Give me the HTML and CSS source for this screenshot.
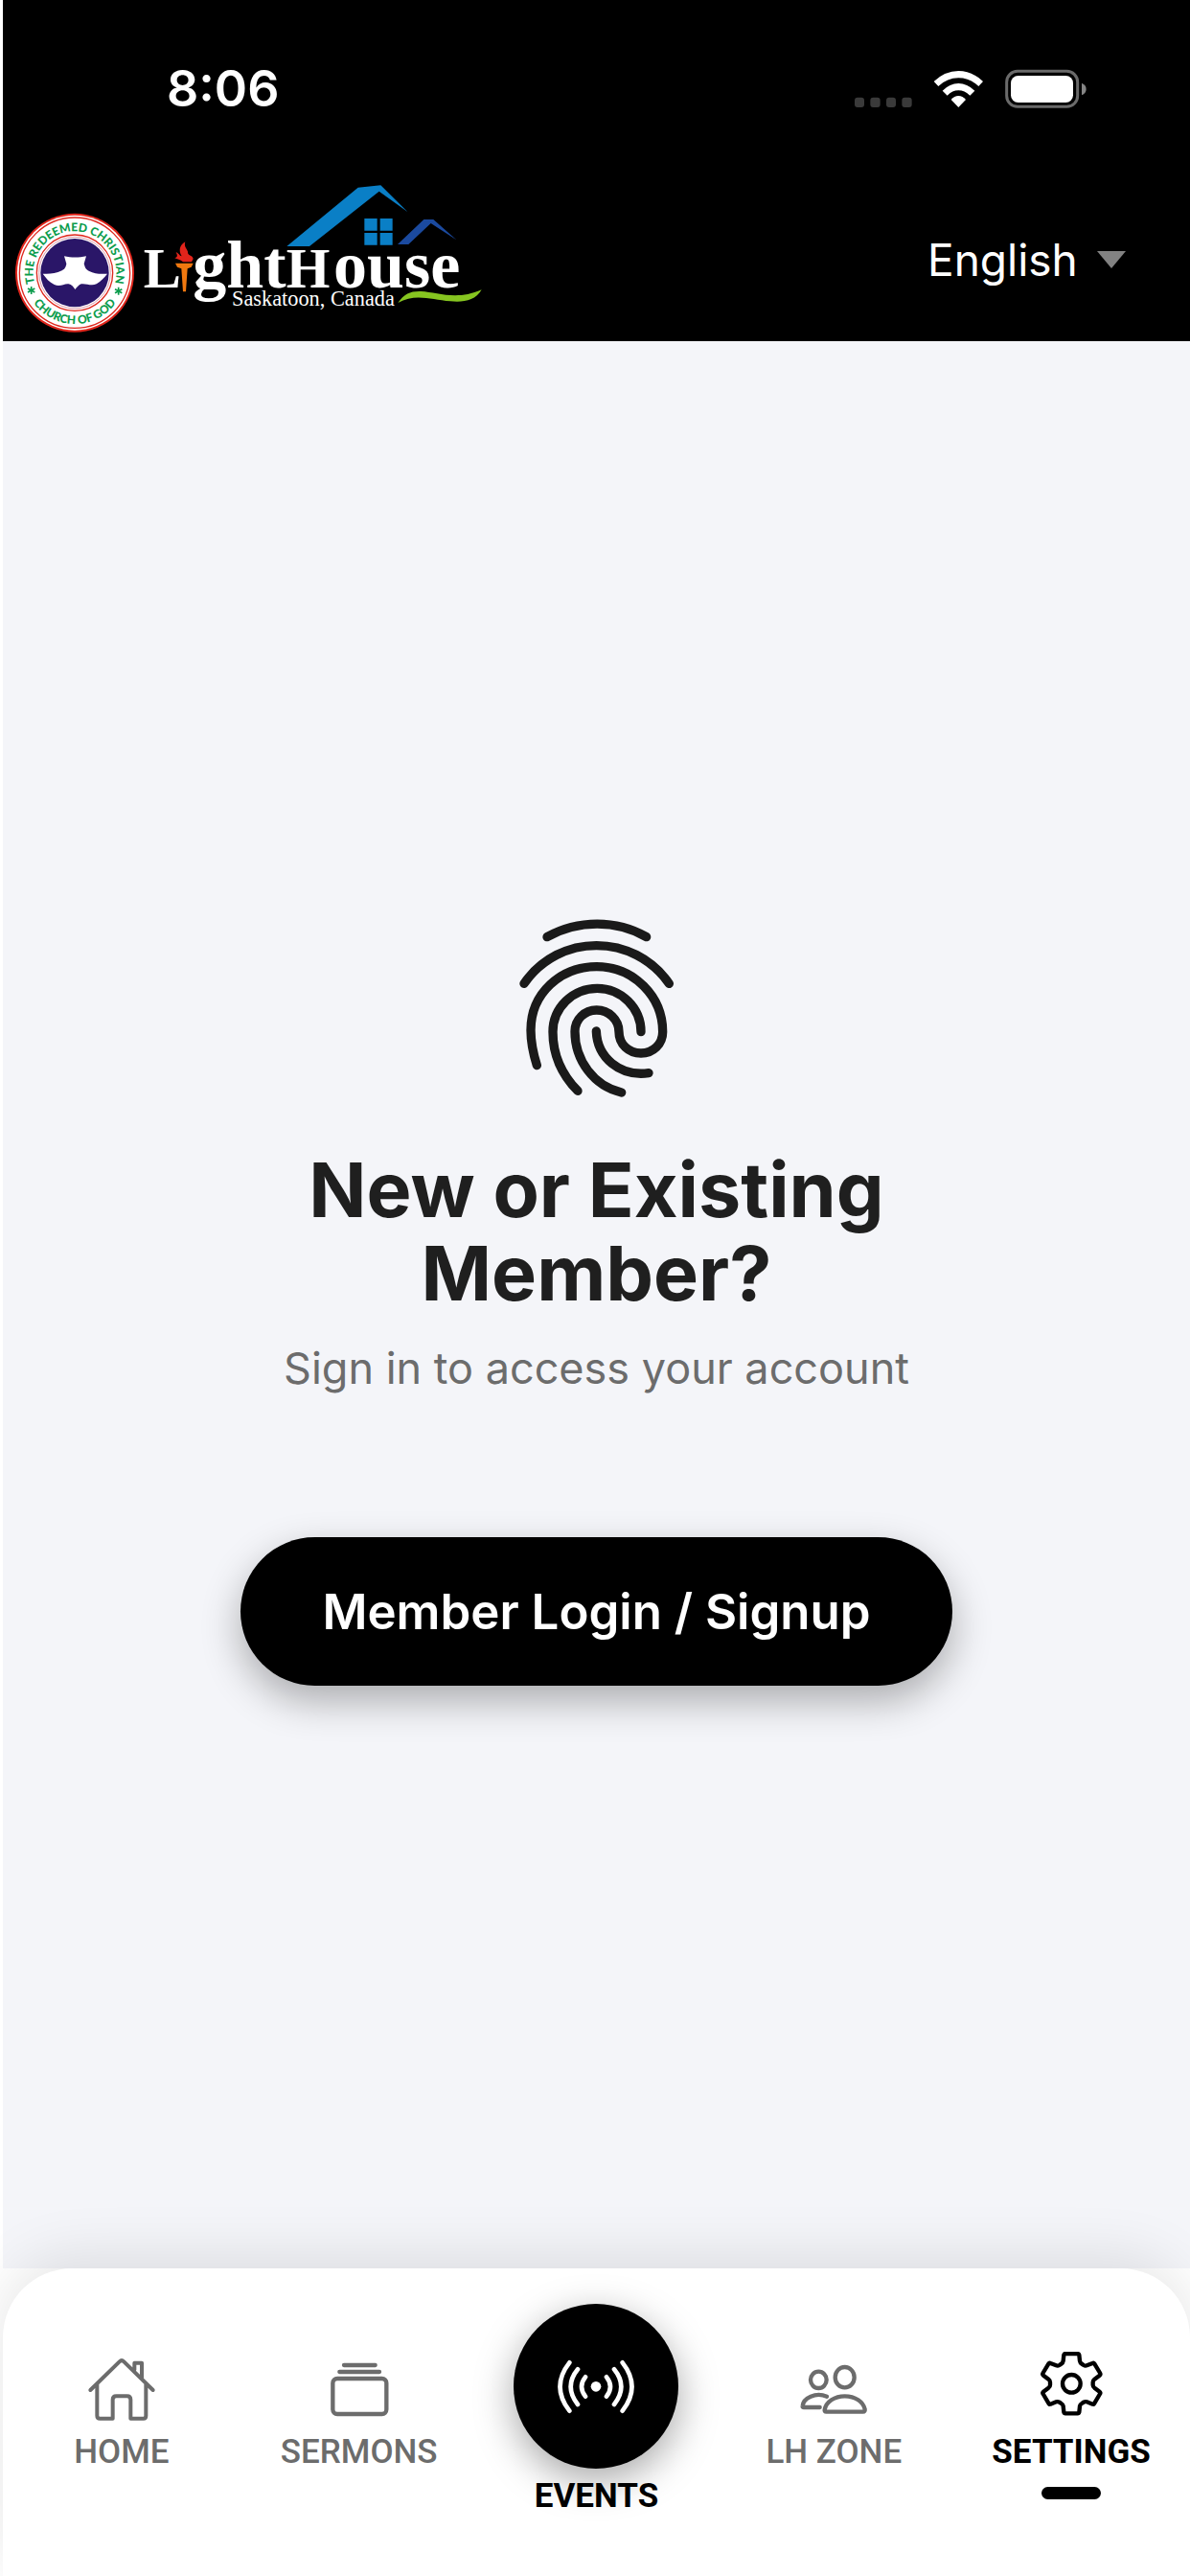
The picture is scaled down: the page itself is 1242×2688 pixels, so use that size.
FILE: index.html
```html
<!DOCTYPE html>
<html lang="en">
<head>
<meta charset="utf-8">
<meta name="viewport" content="width=device-width, initial-scale=1">
<title>LightHouse Saskatoon</title>
<link rel="stylesheet" href="styles.css">
</head>
<body>
<div class="app">
  <header class="header">
    <div class="status">
      <time class="clock">8:06</time>
      <svg class="status-icons" viewBox="120 90 738 138" aria-hidden="true">
        <g fill="#3a3a3a">
          <rect x="126" y="185" width="30" height="31" rx="9"/>
          <rect x="175" y="185" width="31" height="31" rx="9"/>
          <rect x="225" y="185" width="30" height="31" rx="9"/>
          <rect x="274" y="185" width="31" height="31" rx="9"/>
        </g>
        <g fill="#fff">
          <path d="M374 135Q409 102 451 102T528 135L514 150Q486 124 451 124T388 150Z"/>
          <path d="M401 164Q424 141 451 141T502 164L487 179Q470 163 451 163T416 179Z"/>
          <path d="M428 192Q438 180 451 180T474 192L451 216Z"/>
        </g>
        <rect x="602" y="103" width="222" height="111" rx="34" fill="none" stroke="#6a6a6a" stroke-width="9"/>
        <rect x="615" y="117" width="195" height="84" rx="23" fill="#fff"/>
        <path d="M837 140Q851 146 851 159T837 178Z" fill="#858585"/>
      </svg>
    </div>
    <div class="brand">
      <svg class="logo" viewBox="9 48 1512 510" role="img" aria-label="The Redeemed Christian Church of God, LightHouse Saskatoon, Canada">
        <defs>
          <path id="arc-top" d="M104 380A130 130 0 1 1 364 380"/>
          <path id="arc-bottom" d="M84 400A160 160 0 0 0 384 400"/>
        </defs>
        <circle cx="234" cy="344" r="186" fill="#e0261c"/>
        <circle cx="234" cy="344" r="180" fill="#fff"/>
        <circle cx="234" cy="344" r="173" fill="none" stroke="#e0261c" stroke-width="4"/>
        <circle cx="234" cy="344" r="119" fill="none" stroke="#e0261c" stroke-width="4"/>
        <circle cx="234" cy="344" r="112" fill="none" stroke="#c96a80" stroke-width="2"/>
        <circle cx="234" cy="344" r="107" fill="#2a1668"/>
        <path d="M201 292C222 297 248 297 270 292L263 316C266 326 268 334 278 338C298 349 317 348 336 347C325 361 315 370 302 379C285 386 268 376 254 379C246 382 241 390 235 396C230 388 224 380 215 379C202 376 189 390 170 381C154 373 144 361 134 347C155 348 173 347 194 337C204 332 206 326 208 316Z" fill="#fff"/>
        <g class="seal-text" text-anchor="middle">
          <text><textPath href="#arc-bottom" startOffset="50%">CHURCH OF GOD</textPath></text>
        </g>
        <g class="seal-text" text-anchor="middle">
          <path id="arc-name" d="M111 386A130 130 0 1 1 357 386" fill="none"/>
          <text><textPath href="#arc-name" startOffset="50%">THE REDEEMED CHRISTIAN</textPath></text>
        </g>
        <path d="M98 387V411M87 393L109 405M87 405L109 393M371 389V413M360 395L382 407M360 407L382 395" stroke="#0b9c4c" stroke-width="5"/>
        <path d="M898 261L1121 77L1192 70L1276 153L1187 89L969 261Z" fill="#0a7fc6"/>
        <path d="M1141 174H1181V212H1141ZM1190 174H1229V212H1190ZM1141 219H1181V257H1141ZM1190 219H1229V257H1190Z" fill="#0a7fc6"/>
        <path d="M1245 255L1327 177H1357L1429 241L1349 189L1279 255Z" fill="#1b4a9f"/>
        <g class="wordmark">
          <text class="cap" x="449" y="390">L</text>
          <text class="low" x="604" y="390">ght</text>
          <text class="cap" x="896" y="390">H</text>
          <text class="low" x="1044" y="390">ouse</text>
        </g>
        <text class="place" x="726" y="448">Saskatoon, Canada</text>
        <path d="M549 314H605L599 326L587 331L582 403H573L568 331L555 326Z" fill="#f0780f"/>
        <path d="M580 247C574 265 590 270 588 282C591 291 602 288 605 300L600 310H573C565 302 554 302 547 298C558 294 555 288 551 280C559 281 562 292 569 292C559 275 561 258 580 247Z" fill="#e2241b"/>
        <path d="M1246 438C1266 409 1286 401 1318 402C1370 405 1430 432 1508 397C1488 433 1450 436 1410 433C1350 428 1300 407 1246 438Z" fill="#86c520"/>
      </svg>
      <label class="language">
        <select class="language-select" aria-label="Language">
          <option>English</option>
        </select>
        <svg class="caret" viewBox="0 0 30 18" aria-hidden="true"><path d="M0 0H30L15 18Z" fill="#828282"/></svg>
      </label>
    </div>
  </header>

  <main class="main">
    <svg class="fingerprint" viewBox="120 108 498 570" fill="none" stroke="#1a1a1a" stroke-width="28" stroke-linecap="round" aria-hidden="true">
      <path d="M213 173C310 119 430 119 524 173"/>
      <path d="M141 319C250 160 485 160 595 319"/>
      <path d="M181 575C167 530 162 500 162 465C162 350 255 266 368 266C485 266 575 360 575 470C575 508 545 537 507 537C468 537 438 508 438 470C438 432 406 402 368 402C330 402 300 432 300 469C300 560 360 640 446 660"/>
      <path d="M507 470C507 395 445 334 370 334C293 334 231 395 231 470C231 540 260 605 309 655"/>
      <path d="M367 468C370 550 440 611 531 599"/>
    </svg>
    <h1 class="title">New or Existing Member?</h1>
    <p class="subtitle">Sign in to access your account</p>
    <button class="login" type="button">Member Login / Signup</button>
  </main>

  <div class="dock">
    <nav class="tabs" aria-label="Main">
      <a class="tab" href="#home">
        <svg class="tab-icon" viewBox="272 342 216 216" fill="none" stroke="#6c6c6c" stroke-width="12" stroke-linecap="round" stroke-linejoin="round" aria-hidden="true">
          <path d="M282 462L373 373Q380 366 387 373L478 462M303 444V542Q303 551 312 551H352V492Q352 481 363 481H397Q408 481 408 492V551H448Q456 551 456 542V444M420 398V377H443V424"/>
        </svg>
        <span class="tab-label">HOME</span>
      </a>
      <a class="tab" href="#sermons">
        <svg class="tab-icon" viewBox="1020 342 216 216" fill="none" stroke="#6c6c6c" stroke-width="13" stroke-linecap="round" aria-hidden="true">
          <path d="M1080 384H1178M1066 405H1191"/>
          <rect x="1045" y="426" width="168" height="111" rx="14"/>
        </svg>
        <span class="tab-label">SERMONS</span>
      </a>
      <a class="tab tab-events" href="#events">
        <span class="events-disc">
          <svg class="events-icon" viewBox="302 360 252 180" fill="none" stroke="#fff" stroke-width="14" stroke-linecap="round" aria-hidden="true">
            <circle cx="428" cy="451" r="16" fill="#fff" stroke="none"/>
            <path d="M395 421Q371 451 395 482M371 397Q327 451 371 507M345 376Q286 451 345 527M461 421Q485 451 461 482M485 397Q529 451 485 507M511 376Q570 451 511 527"/>
          </svg>
        </span>
        <span class="tab-label">EVENTS</span>
      </a>
      <a class="tab" href="#zone">
        <svg class="tab-icon" viewBox="1060 342 216 216" fill="none" stroke="#6c6c6c" stroke-width="13" stroke-linecap="round" stroke-linejoin="round" aria-hidden="true">
          <ellipse cx="1121" cy="430" rx="25" ry="26"/>
          <ellipse cx="1203" cy="422" rx="30" ry="32"/>
          <path d="M1147 482C1112 468 1073 486 1071 512Q1070 516 1075 516H1125M1140 524C1144 498 1172 481 1203 481C1236 481 1261 499 1266 522Q1267 530 1260 530H1145Q1139 530 1140 524Z"/>
        </svg>
        <span class="tab-label">LH ZONE</span>
      </a>
      <a class="tab tab-current" href="#settings" aria-current="page">
        <svg class="tab-icon" viewBox="545 342 216 216" fill="none" stroke="#000" stroke-width="13" stroke-linejoin="round" aria-hidden="true">
          <path d="M635 348H673Q677 348 678 352L680 371Q681 377 686 380L692 384Q697 387 702 385L720 378Q724 376 726 380L743 408Q746 413 742 416L726 428Q721 432 721 437V446Q721 451 726 455L742 467Q746 470 743 474L726 503Q724 508 720 506L702 499Q697 497 692 500L686 504Q681 507 680 512L678 531Q677 535 673 535H635Q631 535 630 531L628 512Q627 507 622 504L616 500Q611 497 606 499L588 506Q584 508 582 503L565 474Q562 470 566 467L582 455Q587 451 587 446V437Q587 432 582 428L566 416Q562 413 565 408L582 380Q584 376 588 378L606 385Q611 387 616 384L622 380Q627 377 628 371L630 352Q631 348 635 348Z"/>
          <circle cx="654" cy="442" r="28"/>
        </svg>
        <span class="tab-label">SETTINGS</span>
        <span class="tab-marker"></span>
      </a>
    </nav>
  </div>
</div>
</body>
</html>
```
FILE: styles.css
```css
* {
  box-sizing: border-box;
}

body {
  margin: 0;
  background: #fff;
  font-family: Inter, "Liberation Sans", sans-serif;
}

.app {
  display: flex;
  flex-direction: column;
  min-height: 100vh;
  padding-left: 3px;
}

.header {
  background: #000;
  color: #fff;
}

.status {
  display: flex;
  align-items: center;
  justify-content: space-between;
  height: 186px;
  padding: 0 106px 0 171px;
}

.clock {
  font-size: 52px;
  font-weight: 600;
  line-height: 64px;
}

.status-icons {
  width: 246px;
  height: 46px;
}

.brand {
  display: flex;
  align-items: center;
  justify-content: space-between;
  padding-right: 67px;
}

.logo {
  width: 504px;
  height: 170px;
}

.seal-text {
  fill: #0b9c4c;
  font-family: Lato, sans-serif;
  font-size: 36px;
  font-weight: 900;
}

.wordmark,
.place {
  fill: #fff;
  font-family: "Liberation Serif", serif;
}

.wordmark {
  font-weight: 700;
}

.cap {
  font-size: 176px;
}

.low {
  font-size: 210px;
}

.place {
  font-size: 67px;
}

.language {
  display: flex;
  align-items: center;
  gap: 20px;
}

.language-select {
  appearance: none;
  padding: 0;
  border: 0;
  background: transparent;
  color: #fff;
  font: 400 46px/56px Inter, sans-serif;
}

.caret {
  width: 30px;
  height: 18px;
}

.main {
  display: flex;
  flex: 1;
  flex-direction: column;
  align-items: center;
  justify-content: center;
  padding: 32px 32px 40px;
  background: #f4f5f9;
  text-align: center;
}

.fingerprint {
  width: 166px;
  height: 190px;
}

.title {
  max-width: 700px;
  margin: 52px 0 0;
  color: #1f1f1f;
  font-size: 79px;
  font-weight: 700;
  line-height: 87px;
}

.subtitle {
  margin: 28px 0 0;
  color: #6c6c6c;
  font-size: 45px;
  line-height: 56px;
}

.login {
  width: 743px;
  max-width: 100%;
  margin-top: 148px;
  padding: 48px 32px 47px;
  border: 0;
  border-radius: 78px;
  background: #000;
  box-shadow: 0 16px 40px rgba(0, 0, 0, 0.3);
  color: #fff;
  font: 600 51px/60px Inter, sans-serif;
}

.dock {
  position: relative;
  background: #fff;
}

.tabs {
  display: grid;
  grid-template-columns: repeat(5, 1fr);
  padding-bottom: 63px;
  border-radius: 72px 72px 0 0;
  background: #fff;
  box-shadow: 0 -12px 60px rgba(0, 0, 0, 0.1);
}

.tab {
  display: flex;
  flex-direction: column;
  align-items: center;
  padding-top: 87px;
  color: #6c6c6c;
  font: 500 35px/40px Roboto, sans-serif;
  text-decoration: none;
}

.tab-icon {
  width: 72px;
  height: 72px;
}

.tab-label {
  margin-top: 13px;
}

.tab-current,
.tab-events {
  color: #000;
  font-weight: 700;
}

.tab-events {
  padding-top: 37px;
}

.events-disc {
  display: flex;
  align-items: center;
  justify-content: center;
  width: 172px;
  height: 172px;
  border-radius: 50%;
  background: #000;
  box-shadow: 0 12px 40px rgba(0, 0, 0, 0.35);
}

.events-icon {
  width: 84px;
  height: 60px;
}

.tab-events .tab-label {
  position: relative;
  margin-top: 9px;
}

.tab-marker {
  width: 62px;
  height: 13px;
  margin-top: 16px;
  border-radius: 7px;
  background: #000;
}
```
